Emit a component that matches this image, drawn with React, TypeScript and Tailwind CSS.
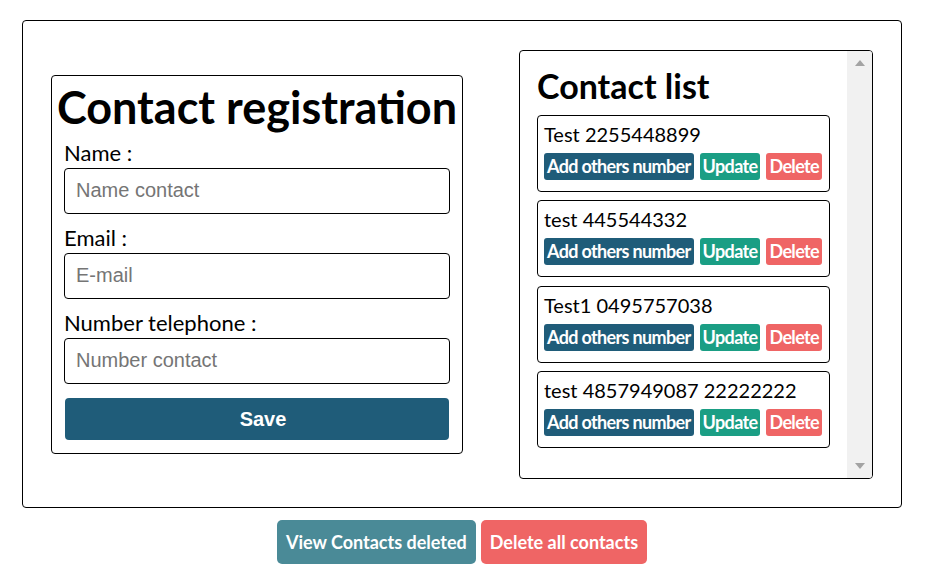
const contacts = [
  "Test 2255448899",
  "test 445544332",
  "Test1 0495757038",
  "test 4857949087 22222222",
];

const lato = { fontFamily: "Lato, 'Noto Sans', sans-serif" };

const Field = ({ label, placeholder, first }: { label: string; placeholder: string; first?: boolean }) => (
  <div className={`flex flex-col ${first ? "mt-[6px]" : "mt-3"}`}>
    <label className="text-[22px] leading-[24px] text-black">{label}</label>
    <input
      type="text"
      placeholder={placeholder}
      className="mt-[3px] h-[46px] w-full rounded-[4px] border border-black px-[11px] text-[20px] placeholder:text-[#757575] font-['Liberation_Sans',Arial,sans-serif]"
    />
  </div>
);

const ItemButton = ({ label, color }: { label: string; color: string }) => (
  <button
    className={`h-[27px] shrink-0 whitespace-nowrap rounded-[3px] px-[3px] text-[18px] font-bold leading-[27px] tracking-[-0.65px] text-white ${color}`}
  >
    {label}
  </button>
);

const App = () => {
  return (
    <div className="min-h-[588px] bg-white pt-5" style={lato}>
      <div className="ml-[22px] w-[880px]">
        <div className="flex h-[488px] items-center justify-between rounded-[4px] border border-black px-[28px]">
          <form className="flex w-[412px] flex-col rounded-[4px] border border-black px-3 pb-[13px] pt-[3px]">
            <h1 className="-mx-3 text-center text-[45px] font-bold leading-[56px] whitespace-nowrap">
              Contact registration
            </h1>
            <Field label="Name :" placeholder="Name contact" first />
            <Field label="Email :" placeholder="E-mail" />
            <Field label="Number telephone :" placeholder="Number contact" />
            <button
              type="button"
              className="mx-px mt-[14px] h-[42px] rounded-[4px] bg-[#1f5c79] pl-3 text-[20px] font-bold text-white font-['Liberation_Sans',Arial,sans-serif]"
            >
              Save
            </button>
          </form>

          <div className="flex h-[429px] w-[354px] overflow-hidden rounded-[4px] border border-black">
            <div className="flex-1 px-[17px] pt-[13px]">
              <h2 className="text-[34px] font-bold leading-[44px]">Contact list</h2>
              <div className="mt-[7px] flex w-[293px] flex-col gap-[8.5px]">
                {contacts.map((c) => (
                  <div key={c} className="rounded-[4px] border border-black px-[6px] pt-[6px] pb-[11px]">
                    <p className="text-[20px] leading-[24px]">{c}</p>
                    <div className="mt-[7px] flex gap-[6px]">
                      <ItemButton label="Add others number" color="bg-[#1f5c79]" />
                      <ItemButton label="Update" color="bg-[#1a9e84]" />
                      <ItemButton label="Delete" color="bg-[#ef6565]" />
                    </div>
                  </div>
                ))}
              </div>
            </div>
            <div className="flex w-[25px] flex-col items-center justify-between bg-[#f1f1f1] py-[9px]">
              <svg width="10" height="6" viewBox="0 0 10 6">
                <path d="M5 0 L10 6 L0 6 Z" fill="#a3a3a3" />
              </svg>
              <svg width="10" height="6" viewBox="0 0 10 6">
                <path d="M0 0 L10 0 L5 6 Z" fill="#a3a3a3" />
              </svg>
            </div>
          </div>
        </div>

        <div className="mt-3 flex justify-center gap-[5px]">
          <button className="h-[44px] rounded-[5px] bg-[#4a8a97] px-[9px] text-[18px] font-bold text-white">
            View Contacts deleted
          </button>
          <button className="h-[44px] rounded-[5px] bg-[#ef6565] px-[9px] text-[18px] font-bold text-white">
            Delete all contacts
          </button>
        </div>
      </div>
    </div>
  );
};

export default App;
